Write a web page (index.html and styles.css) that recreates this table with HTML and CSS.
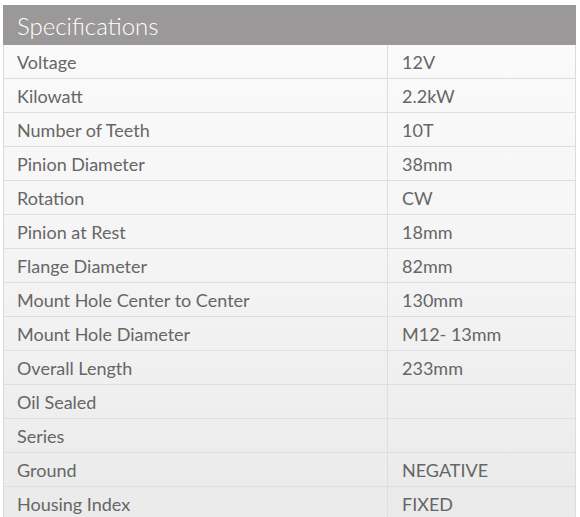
FILE: index.html
```html
<!DOCTYPE html>
<html>
<head>
<meta charset="utf-8">
<link rel="stylesheet" href="styles.css">
</head>
<body>
<div class="specs">
  <div class="specs-title">Specifications</div>
  <table class="specs-table">
    <tr><td class="k">Voltage</td><td class="v">12V</td></tr>
    <tr><td class="k">Kilowatt</td><td class="v">2.2kW</td></tr>
    <tr><td class="k">Number of Teeth</td><td class="v">10T</td></tr>
    <tr><td class="k">Pinion Diameter</td><td class="v">38mm</td></tr>
    <tr><td class="k">Rotation</td><td class="v">CW</td></tr>
    <tr><td class="k">Pinion at Rest</td><td class="v">18mm</td></tr>
    <tr><td class="k">Flange Diameter</td><td class="v">82mm</td></tr>
    <tr><td class="k">Mount Hole Center to Center</td><td class="v">130mm</td></tr>
    <tr><td class="k">Mount Hole Diameter</td><td class="v">M12- 13mm</td></tr>
    <tr><td class="k">Overall Length</td><td class="v">233mm</td></tr>
    <tr><td class="k">Oil Sealed</td><td class="v"></td></tr>
    <tr><td class="k">Series</td><td class="v"></td></tr>
    <tr><td class="k">Ground</td><td class="v">NEGATIVE</td></tr>
    <tr><td class="k">Housing Index</td><td class="v">FIXED</td></tr>
  </table>
</div>
</body>
</html>
```
FILE: styles.css
```css
html, body {
  margin: 0;
  padding: 0;
  background: #ffffff;
}
body {
  padding: 5px 4px 0 3px;
  font-family: Lato, "Open Sans", sans-serif;
  overflow: hidden;
}
.specs {
  width: 573px;
  background: linear-gradient(to bottom, #fbfbfb 0%, #f6f6f6 40%, #eaeaea 100%);
}
.specs-title {
  height: 40px;
  background: #9a9898;
  color: #ffffff;
  font-size: 24px;
  font-weight: 300;
  line-height: 42px;
  padding-left: 14px;
}
.specs-table {
  width: 573px;
  border-collapse: collapse;
  border-left: 1px solid #dcdcdc;
  border-right: 1px solid #dcdcdc;
  table-layout: fixed;
}
.specs-table td {
  height: 33px;
  padding: 2px 0 0 13px;
  border-bottom: 1px solid #dedede;
  color: #666666;
  font-size: 18px;
  line-height: 31px;
  vertical-align: middle;
  box-sizing: border-box;
}
.specs-table td.k {
  width: 384px;
  border-right: 1px solid #dedede;
}
.specs-table td.v {
  padding-left: 14px;
}
```
